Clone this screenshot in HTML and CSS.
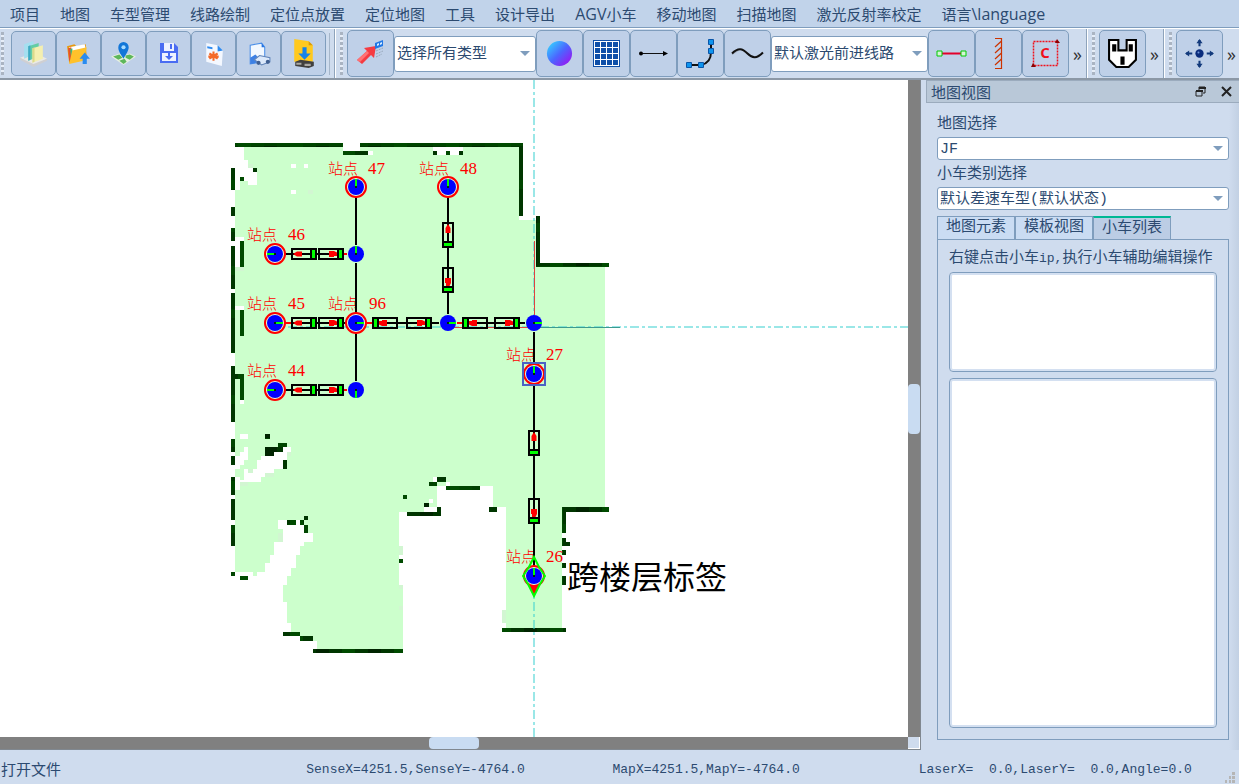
FILE: index.html
```
<!DOCTYPE html>
<html lang="zh-CN">
<head>
    <meta charset="UTF-8">
    <meta name="viewport" content="width=device-width, initial-scale=1.0">
    <title>AGV 地图编辑</title>
    <link rel="stylesheet" href="styles.css">
</head>
<body>
    <nav class="menubar">
        <button>项目</button>
        <button>地图</button>
        <button>车型管理</button>
        <button>线路绘制</button>
        <button>定位点放置</button>
        <button>定位地图</button>
        <button>工具</button>
        <button>设计导出</button>
        <button><span class="menu-latin">AGV</span>小车</button>
        <button>移动地图</button>
        <button>扫描地图</button>
        <button>激光反射率校定</button>
        <button>语言<span class="menu-latin">\language</span></button>
    </nav>

    <div class="toolbars">
        <div class="toolbar files">
            <span class="handle"></span>
            <button class="tool small" aria-label="项目列表">
                <svg width="27" height="27" viewBox="0 0 26 26">
                    <path d="M0 17l14-5 12 6-13 7z" fill="#e9e9e6"/>
                    <path d="M0 17l13 6 13-5v2l-13 6-13-7z" fill="#cfcfd2"/>
                    <path d="M4 4l9-3v13l-9 4z" fill="#a5dff0"/>
                    <path d="M8 6l10-3v13l-10 4z" fill="#63cda4"/>
                    <path d="M8 6l2-1v14l-2 1z" fill="#3fa9c8"/>
                    <path d="M12 8l10-3v13l-10 4z" fill="#f4efb0"/>
                    <path d="M12 8l2-1v14l-2 1z" fill="#dcd98a"/>
                </svg>
            </button>
            <button class="tool small" aria-label="打开文件">
                <svg width="27" height="27" viewBox="0 0 26 26">
                    <path d="M2 6l7-2 2 2 9-2 1 14-17 4z" fill="#e79a10"/>
                    <path d="M4 7l15-3 1 5-16 8z" fill="#fff"/>
                    <path d="M3 8l3-1 1 12-3 1z" fill="#e8502c"/>
                    <path d="M5 9l2-1 1 10-2 1z" fill="#43b875"/>
                    <path d="M7 10l14-3-3 13-14 3z" fill="#ffc12b"/>
                    <path d="M19 12l5 6h-3v5h-4v-5h-3z" fill="#2a8cf0"/>
                </svg>
            </button>
            <button class="tool small" aria-label="地图定位">
                <svg width="27" height="27" viewBox="0 0 26 26">
                    <path d="M1 16l8-3 5 2 5-2 6 3-12 8z" fill="#e6efe0"/>
                    <path d="M3 16l6-2 3 3-4 2zM15 15l4-1 4 2-4 3-4-2zM9 20l5-2 2 3-3 2z" fill="#5db75b"/>
                    <path d="M13 18C9 12 8 10 8 7a5 5 0 0 1 10 0c0 3-2 6-5 11z" fill="#1276d8"/>
                    <circle cx="13" cy="7" r="2" fill="#a8dcff"/>
                </svg>
            </button>
            <button class="tool small" aria-label="保存">
                <svg width="25" height="25" viewBox="0 0 25 25">
                    <path d="M4 2h14l4 4v16H4z" fill="#4a6cf2"/>
                    <path d="M8 2h10v8H8z" fill="#eef2ff"/>
                    <path d="M14 3h2v5h-2z" fill="#4a6cf2"/>
                    <path d="M6 12h14v8H6z" fill="#eef2ff"/>
                    <path d="M12 12h2v3h3l-4 4-4-4h3z" fill="#4a6cf2"/>
                </svg>
            </button>
            <button class="tool small" aria-label="配置文档">
                <svg width="27" height="27" viewBox="0 0 26 26">
                    <path d="M6 3l11 2 5 5-1 15-15-4z" fill="#f4f8ff"/>
                    <path d="M17 5l5 5-5 1z" fill="#2f8bf0"/>
                    <path d="M7 6l5 1v2l-5-1z" fill="#2f8bf0"/>
                    <path d="M13 11v9M9 13l8 5M9 18l8-5M8 16h10" stroke="#f46a2a" stroke-width="2"/>
                </svg>
            </button>
            <button class="tool small" aria-label="车辆文档">
                <svg width="27" height="27" viewBox="0 0 26 26">
                    <path d="M5 5l11-2 3 4v14l-14 2z" fill="#f2f8ff" stroke="#4b8fe8"/>
                    <path d="M16 3l3 4h-3z" fill="#2675e2"/>
                    <path d="M5 17l5-3 3 3-2 5-6 1z" fill="#3d80e4"/>
                    <path d="M9 19l5-4 10 2v4l-8 3z" fill="#dce9fb" stroke="#6184b8"/>
                    <circle cx="13" cy="22" r="2" fill="#3f5f92"/>
                    <circle cx="22" cy="21" r="2" fill="#3f5f92"/>
                </svg>
            </button>
            <button class="tool small" aria-label="下载到小车">
                <svg width="27" height="33" viewBox="0 0 26 32">
                    <path d="M4 2l14 2 4 4v16H4z" fill="#ffc91f"/>
                    <path d="M18 4l4 4h-4z" fill="#d99a08"/>
                    <path d="M12 10h4v6h4l-6 6-6-6h4z" fill="#1683e8"/>
                    <path d="M5 24l5-2 13 2v4l-5 2-13-2z" fill="#41403f"/>
                    <path d="M6 25h5v2H6zM14 26h6v2h-6z" fill="#aaa9a5"/>
                </svg>
            </button>
            <span class="divider"></span>
        </div>

        <div class="toolbar draw">
            <span class="handle"></span>
            <button class="tool" aria-label="选择元素">
                <svg width="31" height="31" viewBox="0 0 31 31">
                    <path d="M2 22l10-9-3-3 12-2-2 12-3-3-9 9z" fill="#f53b42"/>
                    <path d="M2 22l10-9 2 2-9 9z" fill="#ff7275"/>
                    <path d="M20 5l8-3v6l-8 3z" fill="#2178e6"/>
                    <path d="M22 6l2-1v2l-2 1zM25 5l2-1v2l-2 1z" fill="#d9edff"/>
                    <path d="M21 13l7-3M21 16l7-3M21 19l6-3" stroke="#98a8bb" stroke-width="1" stroke-dasharray="2 1"/>
                </svg>
            </button>
            <span class="combo type">
                <select aria-label="元素类型"><option>选择所有类型</option></select>
            </span>
            <button class="tool" aria-label="球形节点">
                <svg width="27" height="27" viewBox="0 0 28 28">
                    <defs>
                        <linearGradient id="ball" x1="0.1" y1="0.2" x2="0.8" y2="0.9">
                            <stop offset="0" stop-color="#38bfff"/>
                            <stop offset="0.5" stop-color="#4b66ff"/>
                            <stop offset="1" stop-color="#8e21f4"/>
                        </linearGradient>
                    </defs>
                    <circle cx="14" cy="14" r="13" fill="url(#ball)"/>
                </svg>
            </button>
            <button class="tool" aria-label="网格">
                <svg width="29" height="29" viewBox="0 0 29 29">
                    <rect x="1.5" y="1.5" width="26" height="26" fill="#fff" stroke="#0f4fa8"/>
                    <path d="M3 5.5h23M3 11.5h23M3 17.5h23M3 23.5h23" stroke="#0f4fa8" stroke-width="5" stroke-dasharray="5 1"/>
                </svg>
            </button>
            <button class="tool" aria-label="直线">
                <svg width="31" height="11" viewBox="0 0 31 11">
                    <path d="M2 5.5h24" stroke="#111"/>
                    <circle cx="3" cy="5.5" r="2"/>
                    <path d="M25 3l5 2.5-5 2.5z"/>
                </svg>
            </button>
            <button class="tool" aria-label="曲线">
                <svg width="31" height="31" viewBox="0 0 31 31">
                    <path d="M4 27h12q10-2 10-13V4" fill="none" stroke="#111" stroke-width="2"/>
                    <path d="M1.5 24.5h5v5h-5zM13.500 24.5h5v5h-5zM23.500 10.5h5v5h-5zM23.500 1.500h5v5h-5z" fill="#0e94ee" stroke="#0a55a8"/>
                </svg>
            </button>
            <button class="tool" aria-label="样条曲线">
                <svg width="33" height="15" viewBox="0 0 32 14">
                    <path d="M1 8l8-5 13 8 9-5" fill="none" stroke="#a9b5c6"/>
                    <path d="M1 7C7 1 11 2 16 7s9 5 15-1" fill="none" stroke="#111" stroke-width="2"/>
                </svg>
            </button>
            <span class="combo route">
                <select aria-label="线路类型"><option>默认激光前进线路</option></select>
            </span>
            <button class="tool" aria-label="连接线">
                <svg width="31" height="7" viewBox="0 0 31 7">
                    <path d="M6 3.5h19" stroke="#e3002b" stroke-width="2"/>
                    <path d="M1 1h5v5H1zM25 1h5v5h-5z" fill="#d7f5d7" stroke="#0c0"/>
                </svg>
            </button>
            <button class="tool" aria-label="墙体">
                <svg width="9" height="31" viewBox="0 0 9 31">
                    <path d="M1 .5h6.500v30H1M7.500 3l-6.500 6M7.500 9l-6.500 6M7.500 15l-6.500 6M7.500 21l-6.500 6" fill="none" stroke="#cc3300" stroke-width="1.200"/>
                </svg>
            </button>
            <button class="tool" aria-label="区域">
                <svg width="29" height="31" viewBox="0 0 29 31">
                    <path d="M2.500 3.500h24v24h-24z" fill="none" stroke="#f0101c" stroke-width="1.500" stroke-dasharray="2 1"/>
                    <path d="M26 1l3 4h-5zM2 25l3 4H0z" fill="#8c0000"/>
                    <text x="14" y="20" class="area-letter">C</text>
                </svg>
            </button>
            <button class="more" aria-label="更多绘制工具">»</button>
        </div>

        <div class="toolbar">
            <span class="handle"></span>
            <button class="tool" aria-label="充电桩">
                <svg width="31" height="31" viewBox="0 0 30 30">
                    <path d="M2 2h9v10h8V2h9v19l-7 7H9l-7-7z" fill="#fff" stroke="#000" stroke-width="2"/>
                    <path d="M5 6h4v7H5zM21 6h4v7h-4zM13 18h4v8h-4z"/>
                </svg>
            </button>
            <button class="more" aria-label="更多充电工具">»</button>
        </div>

        <div class="toolbar last">
            <span class="handle"></span>
            <button class="tool" aria-label="移动">
                <svg width="31" height="31" viewBox="0 0 30 30">
                    <path d="M15 2v6M15 22v6M2 15h6M22 15h6" stroke="#133a7c" stroke-width="2"/>
                    <path d="M12 5l3-4 3 4zM12 25l3 4 3-4zM5 12l-4 3 4 3zM25 12l4 3-4 3z" fill="#133a7c"/>
                    <circle cx="15" cy="15" r="4" fill="#0a2c7c"/>
                    <circle cx="14" cy="14" r="1" fill="#6f93d8"/>
                </svg>
            </button>
            <button class="more" aria-label="更多移动工具">»</button>
        </div>
    </div>

    <main class="workspace">
        <section class="viewport">
            <svg class="map" role="img" aria-label="激光地图">
                <defs>
                    <pattern id="wall" width="52" height="43" patternUnits="userSpaceOnUse">
                        <rect width="52" height="43" fill="#003600"/>
                        <rect x="4" width="13" height="43" fill="#002400"/>
                        <rect x="30" width="13" height="43" fill="#004a00"/>
                        <rect y="8" width="52" height="9" fill="#004c00" fill-opacity="0.7"/>
                    </pattern>
                    <g id="stop">
                        <circle r="10" fill="#e2ffe2" stroke="#f00" stroke-width="2"/>
                        <circle r="8" fill="#00f"/>
                    </g>
                    <g id="slot">
                        <rect x="-12" y="-5" width="24" height="10" fill="none" stroke="#000" stroke-width="2"/>
                        <path d="M7-5v10" stroke="#000" stroke-width="2"/>
                        <path d="M9.500-4v8" stroke="#0f0" stroke-width="3"/>
                    </g>
                    <g id="slot-in">
                        <path d="M-11 0l4-2.500h5v5h-5z" fill="#f00"/>
                        <use href="#slot"/>
                    </g>
                    <g id="slot-out">
                        <path d="M-2-3h5l4 2v3H3v1h-5z" fill="#f00"/>
                        <use href="#slot"/>
                    </g>
                </defs>
                <g transform="translate(0 -80)">
                    <!-- free space -->
                    <g shape-rendering="crispEdges">
                        <path class="floor" d="M235 147H519V220H536V267H605V507H562V628H506V507H493V486H437V512H399V585H403V649H317V641H313V636H291V623H287V602H283V585H287V576H291V568H296V555H300V546H304V542H313V533H304V520H278V529H283V542H274V555H270V563H265V572H257V576H253V572H235Z"/>
                        <path class="free" d="M235 147H244V160H248V164H253V172H257V185H248V181H240V190H235ZM343 143H360V151H343ZM368 151H373V155H368ZM433 147H463V155H433ZM291 164H296V168H291ZM304 164H308V168H304ZM291 190H296V194H291ZM235 237H244V241H240V267H235ZM235 306H244V310H235ZM240 400H244V404H240ZM240 434H248V439H240Z"/>
                        <path class="free" d="M244 447H248V460H244V465H240V469H235V456H240V452H244ZM283 447H291V452H287V460H283V469H274V473H265V477H261V482H248V486H240V490H235V477H240V480H244V469H248V473H253V469H257V460H261V456H274V452H283ZM433 477H437V482H433ZM446 482H450V486H446ZM429 499H433V503H429ZM424 507H437V512H424Z"/>
                        <path class="pale" d="M308 190h5v4h-5zM248 164h5v4h-5zM235 267h9v4h-9zM287 452h4v4h-4zM248 469h5v4h-5zM265 473h9v4h-9zM240 482h8v4h-8zM278 533h5v9h-5zM399 546h4v9h-4zM399 585h4v4h-4zM502 610h4v13h-4zM399 606h4v4h-4z"/>
                        <!-- scanned walls -->
                        <path fill="url(#wall)" d="M235 143h108v4h-108zM360 143h163v4h-163zM343 151h25v4h-25zM433 151h4v4h-4zM446 151h4v4h-4zM459 151h4v4h-4zM519 143h4v73h-4zM536 216h4v51h-4zM536 263h73v4h-73zM562 507h47v5h-47zM562 507h4v26h-4zM562 538h4v8h-4zM566 542h4v4h-4zM562 550h4v5h-4zM562 563h4v5h-4zM562 576h4v9h-4zM502 628h64v4h-64z"/>
                        <path fill="url(#wall)" d="M253 168h4v4h-4zM240 177h4v4h-4zM231 168h4v22h-4zM231 207h4v9h-4zM231 228h4v13h-4zM231 246h4v43h-4zM231 293h4v60h-4zM231 366h4v56h-4zM231 439h4v13h-4zM231 456h4v9h-4zM231 477h4v18h-4zM231 499h4v21h-4zM231 525h4v21h-4zM231 572h4v4h-4zM240 576h8v4h-8zM240 241h4v26h-4zM240 310h4v26h-4zM235 374h9v5h-9zM240 374h4v26h-4z"/>
                        <path fill="url(#wall)" d="M265 434h5v5h-5zM278 443h9v4h-9zM265 447h18v5h-18zM265 452h9v4h-9zM283 460h4v9h-4zM287 520h9v5h-9zM300 520h4v5h-4zM304 516h4v4h-4zM304 525h4v8h-4zM283 632h17v4h-17zM300 636h13v5h-13zM313 649h90v4h-90zM399 559h4v4h-4zM403 495h4v4h-4zM424 503h5v4h-5zM437 507h4v5h-4zM407 512h34v4h-34zM429 482h8v4h-8zM437 477h9v5h-9zM446 486h34v4h-34zM489 507h8v5h-8z"/>
                    </g>

                    <!-- origin cross -->
                    <path class="axis" d="M534 80V2000M288 327H3000"/>
                    <path d="M534 241V315M445 327H620" stroke="#e04040" fill="none" shape-rendering="crispEdges"/>
                    <path d="M536 327H620" stroke="#3d9a90" fill="none" shape-rendering="crispEdges"/>

                    <g class="names">
                        <text x="328" y="174">站点<tspan x="368">47</tspan></text>
                        <text x="419" y="174">站点<tspan x="460">48</tspan></text>
                        <text x="247" y="240">站点<tspan x="288">46</tspan></text>
                        <text x="247" y="309">站点<tspan x="288">45</tspan></text>
                        <text x="328" y="309">站点<tspan x="369">96</tspan></text>
                        <text x="247" y="376">站点<tspan x="288">44</tspan></text>
                        <text x="506" y="360">站点<tspan x="546">27</tspan></text>
                        <text x="506" y="562">站点<tspan x="546">26</tspan></text>
                    </g>

                    <!-- routes -->
                    <path class="route-line" d="M356 197V245M356 263V313M356 333V381M448 197V314M534 332V363M534 384V567M284 254H346M284 390H346"/>
                    <path d="M284 323H346M366 323H439M457 323H525" stroke="#000" stroke-width="2"/>
                    <path d="M285 323h7M344 254h3M344 390h3M366 323h6M457 323h5" stroke="#f00" stroke-width="2"/>
                    <use href="#slot-in" x="304" y="254"/>
                    <use href="#slot-out" x="331" y="254"/>
                    <use href="#slot-in" x="304" y="323"/>
                    <use href="#slot-out" x="331" y="323"/>
                    <use href="#slot-out" transform="translate(385 323) rotate(180)"/>
                    <use href="#slot-out" x="419" y="323"/>
                    <use href="#slot-out" transform="translate(475 323) rotate(180)"/>
                    <use href="#slot-out" x="507" y="323"/>
                    <use href="#slot-in" x="304" y="390"/>
                    <use href="#slot-out" x="331" y="390"/>
                    <use href="#slot-in" transform="translate(448 235) rotate(90)"/>
                    <use href="#slot-out" transform="translate(448 280) rotate(90)"/>
                    <use href="#slot-in" transform="translate(534 443) rotate(90)"/>
                    <use href="#slot-out" transform="translate(534 511) rotate(90)"/>

                    <!-- stations and crossings -->
                    <use href="#stop" x="356" y="187"/>
                    <use href="#stop" x="448" y="187"/>
                    <use href="#stop" x="275" y="254"/>
                    <use href="#stop" x="275" y="323"/>
                    <use href="#stop" x="356" y="323"/>
                    <use href="#stop" x="275" y="390"/>
                    <use href="#stop" x="534" y="374"/>
                    <use href="#stop" x="534" y="576"/>
                    <rect x="523" y="363" width="22" height="22" fill="none" stroke="#4b62c4" stroke-width="2"/>
                    <g fill="#00f">
                        <circle cx="356" cy="254" r="8"/>
                        <circle cx="356" cy="390" r="8"/>
                        <circle cx="448" cy="323" r="8"/>
                        <circle cx="534" cy="323" r="8"/>
                    </g>
                    <path d="M529 586h10l-5 10z" fill="#f00"/>
                    <path d="M534 557l5 10 6 9-5 8-6 12-6-12-5-8 6-9z" fill="none" stroke="#0f0" stroke-width="2"/>
                    <path d="M356 187v-8M448 187v-8M356 254v-8M534 374v-8M534 576v-8M356 390v8M275 254h-8M275 390h-8M275 323h8M356 323h8M448 323h8M534 323h8" stroke="#0f0" stroke-width="2"/>
                    <path class="hub" d="M355 186h2v2h-2zM447 186h2v2h-2zM274 253h2v2h-2zM355 253h2v2h-2zM274 322h2v2h-2zM355 322h2v2h-2zM447 322h2v2h-2zM533 322h2v2h-2zM274 389h2v2h-2zM355 389h2v2h-2zM533 373h2v2h-2zM533 575h2v2h-2z"/>
                    <text class="floor-tag" x="567" y="589">跨楼层标签</text>
                </g>
            </svg>
            <div class="scroll vertical"><span></span></div>
            <div class="scroll horizontal"><span></span></div>
            <div class="corner"></div>
        </section>

        <aside class="dock">
            <header class="dock-title">
                <h2>地图视图</h2>
                <button aria-label="浮动">
                    <svg width="11" height="11" viewBox="0 0 11 11">
                        <path d="M4 4V1h6v6H8M1 5h6v5H1z" fill="none" stroke="#222"/>
                        <path d="M4 1h7v2H4zM1 4h7v2H1z" fill="#222"/>
                    </svg>
                </button>
                <button aria-label="关闭">
                    <svg width="11" height="11" viewBox="0 0 11 11">
                        <path d="M1 1l9 9M10 1l-9 9" stroke="#222" stroke-width="2"/>
                    </svg>
                </button>
            </header>
            <div class="dock-body">
                <label for="mapSelect">地图选择</label>
                <span class="combo">
                    <select id="mapSelect"><option>JF</option></select>
                </span>
                <label for="carType">小车类别选择</label>
                <span class="combo">
                    <select id="carType"><option>默认差速车型(默认状态)</option></select>
                </span>
                <div class="tabs" role="tablist">
                    <button role="tab">地图元素</button>
                    <button role="tab">模板视图</button>
                    <button role="tab" class="active" aria-selected="true">小车列表</button>
                </div>
                <div class="pane" role="tabpanel">
                    <p>右键点击小车<span class="latin">ip,</span>执行小车辅助编辑操作</p>
                    <div class="list cars"></div>
                    <div class="list details"></div>
                </div>
            </div>
        </aside>
    </main>

    <footer class="statusbar">
        <span class="message">打开文件</span>
        <span>SenseX=4251.5,SenseY=-4764.0</span>
        <span>MapX=4251.5,MapY=-4764.0</span>
        <span>LaserX=  0.0,LaserY=  0.0,Angle=0.0</span>
        <svg class="grip" width="10" height="11" viewBox="0 0 10 11">
            <path d="M7 0h3v3H7zM4 4h2v3H4zM7 4h3v3H7zM0 8h2v3H0zM4 8h2v3H4zM7 8h3v3H7z" fill="#b5b5b5"/>
        </svg>
    </footer>
</body>
</html>
```
FILE: styles.css
```
* {
    box-sizing: border-box;
}
body {
    margin: 0;
    height: 100vh;
    display: flex;
    flex-direction: column;
    overflow: hidden;
    background: #cfdcee;
    color: #2c4a70;
    font-family: "Liberation Mono", "Noto Sans CJK SC", monospace;
    font-size: 15px;
}
button {
    padding: 0;
    border: none;
    background: none;
    color: inherit;
    font: inherit;
    cursor: pointer;
}
.menubar {
    display: flex;
    height: 28px;
    background: #c1d3ea;
    border-bottom: 1px solid #7f9dbd;
    font-family: "Open Sans", "Noto Sans CJK SC", sans-serif;
}
.menubar button {
    padding: 0 10px;
    line-height: 24px;
    white-space: nowrap;
}
.menu-latin {
    font-size: 16px;
}

/* toolbars */
.toolbars {
    display: flex;
    height: 52px;
    border-top: 1px solid #fff;
    border-bottom: 2px solid #8c98a6;
}
.toolbar {
    display: flex;
    align-items: center;
    padding-left: 4px;
    border-left: 1px solid #fff;
    border-right: 1px solid #8ea3bb;
}
.toolbar.files {
    padding-left: 1px;
    border-left: none;
}
.toolbar.last {
    flex: 1;
    border-right: none;
}
.handle {
    width: 3px;
    height: 43px;
    margin-right: 4px;
    background: repeating-linear-gradient(#aab4c2 0 3px, #e6edf7 3px 5px);
}
.toolbar.files .handle {
    margin-right: 7px;
}
.tool {
    display: flex;
    align-items: center;
    justify-content: center;
    width: 47px;
    height: 47px;
    background: #bfd0e8;
    border: 1px solid #7f9dbd;
    border-radius: 5px;
}
.tool.small {
    width: 45px;
    height: 45px;
}
.divider {
    width: 1px;
    height: 42px;
    margin: 0 4px 0 3px;
    background: #a5b6ca;
}
.more {
    width: 17px;
    color: #333;
    font-family: "Open Sans", sans-serif;
    font-size: 18px;
}
.area-letter {
    fill: #f0101c;
    font-family: "Open Sans", sans-serif;
    font-size: 15px;
    font-weight: bold;
    text-anchor: middle;
}
.combo {
    position: relative;
    display: block;
}
.combo select {
    width: 100%;
    height: 23px;
    padding: 1px 20px 0 2px;
    appearance: none;
    background: #fff;
    border: 1px solid #7f9dbd;
    border-radius: 3px;
    color: inherit;
    font: inherit;
}
.combo::after {
    content: "";
    position: absolute;
    right: 6px;
    top: 50%;
    margin-top: -3px;
    border: 5px solid transparent;
    border-top-color: #7f9dbd;
    border-bottom: none;
    pointer-events: none;
}
.toolbar .combo select {
    height: 36px;
    padding-top: 2px;
}
.combo.type {
    width: 142px;
}
.combo.route {
    width: 157px;
}

/* map */
.workspace {
    flex: 1;
    display: flex;
    min-height: 0;
}
.viewport {
    flex: 1;
    min-width: 0;
    display: grid;
    grid-template: 1fr 12px / 1fr 12px;
    border-right: 1px solid #808890;
    border-bottom: 1px solid #808890;
}
.map {
    width: 100%;
    height: 100%;
    background: #fff;
}
.floor {
    fill: #ccffcc;
}
.free {
    fill: #fff;
}
.pale {
    fill: #d2f6d2;
}
.axis {
    fill: none;
    stroke: #35cfcf;
    stroke-opacity: 0.5;
    stroke-width: 2;
    stroke-dasharray: 9 3 3 3;
}
.route-line {
    fill: none;
    stroke: #000;
    stroke-width: 2;
}
.hub {
    fill: #002800;
}
.names {
    fill: #f00;
    font-family: "Noto Sans CJK SC", sans-serif;
    font-size: 15px;
    font-weight: 300;
}
.names tspan {
    font-family: "Liberation Serif", serif;
    font-size: 17px;
}
.floor-tag {
    font-family: "Noto Sans CJK SC", sans-serif;
    font-size: 32px;
}
.scroll {
    display: flex;
    align-items: center;
    justify-content: center;
    background: #808080;
}
.scroll span {
    background: #c9dcf2;
    border-radius: 4px;
}
.vertical span {
    width: 12px;
    height: 50px;
}
.horizontal span {
    width: 50px;
    height: 12px;
}
.corner {
    background: #cfdcee;
    border-right: 1px solid #fff;
    border-bottom: 1px solid #fff;
}

/* dock */
.dock {
    display: flex;
    flex-direction: column;
    width: 318px;
    padding-left: 5px;
    background: linear-gradient(to left, #c2d0e3, #cfdcee 10px);
}
.dock-title {
    display: flex;
    align-items: center;
    gap: 15px;
    height: 23px;
    padding: 0 7px 0 4px;
    background: #b9c8d8;
    border: 1px solid #9babbd;
    border-right: none;
}
.dock-title h2 {
    flex: 1;
    margin: 0;
    font-family: "Noto Sans CJK SC", sans-serif;
    font-size: 15px;
    font-weight: normal;
}
.dock-title button,
.dock-title svg {
    display: block;
}
.dock-body {
    flex: 1;
    display: flex;
    flex-direction: column;
    padding: 8px 10px 10px 11px;
}
.dock-body label {
    height: 26px;
    line-height: 28px;
}
.dock-body .combo {
    margin-bottom: 1px;
}
.tabs {
    display: flex;
    align-items: flex-end;
    margin-top: 5px;
}
.tabs button {
    width: 78px;
    height: 23px;
    background: #cadcf3;
    border: 1px solid #7f9dbd;
    border-bottom: none;
    line-height: 22px;
}
.tabs .active {
    background: #bccde5;
    border-top: 2px solid #00b894;
}
.pane {
    flex: 1;
    display: flex;
    flex-direction: column;
    padding: 6px 11px 11px;
    border: 1px solid #7f9dbd;
}
.pane p {
    margin: 0;
    height: 26px;
    line-height: 26px;
    white-space: nowrap;
}
.latin {
    font-size: 13px;
}
.list {
    background: #fff;
    border: 1px solid #7f9dbd;
    border-radius: 4px;
    box-shadow: inset 0 0 0 2px #d4e0f1;
}
.cars {
    height: 100px;
    margin-bottom: 6px;
}
.details {
    flex: 1;
}

/* status */
.statusbar {
    display: grid;
    grid-template-columns: repeat(4, 1fr) 14px;
    align-items: center;
    height: 34px;
    padding-top: 4px;
    font-size: 13px;
}
.statusbar span {
    white-space: pre;
}
.statusbar .message {
    padding-left: 1px;
    font-size: 15px;
}
.grip {
    align-self: end;
    margin-bottom: 1px;
}
```
